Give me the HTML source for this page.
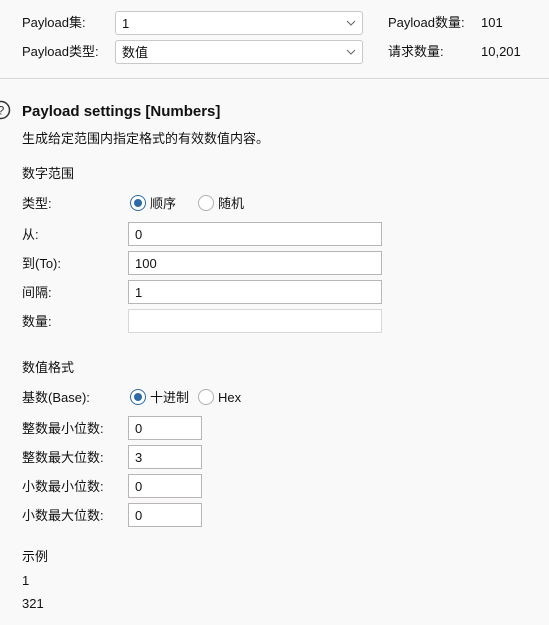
<!DOCTYPE html>
<html><head><meta charset="utf-8"><style>
*{margin:0;padding:0;box-sizing:border-box}
body{width:549px;height:625px;background:#f9f9f9;font-family:"Liberation Sans","Noto Sans CJK SC",sans-serif;font-size:13px;color:#111;position:relative;overflow:hidden}
.a{position:absolute;white-space:nowrap;line-height:16px;margin-top:1px}
.sel{position:absolute;left:115px;width:248px;height:24px;background:#fff;border:1px solid #c8c8c8;border-radius:3px;padding-left:6px;line-height:23px}
.sel svg{position:absolute;right:6px;top:8px}
.in{position:absolute;left:128px;height:24px;background:#fff;border:1px solid #b9b4b8;padding-left:6px;line-height:23px}
.r{position:absolute;width:16px;height:16px;border-radius:50%;background:#fff;border:1px solid #b0b0b0}
.r.on{border:1.5px solid #2c6aa8}
.r.on::after{content:"";position:absolute;left:2.5px;top:2.5px;width:8px;height:8px;border-radius:50%;background:#2c6aa8}
</style></head><body>
<div class="a" style="left:22px;top:14px">Payload集:</div>
<div class="sel" style="top:11px">1<svg width="10" height="6"><path d="M1 1L5 5L9 1" fill="none" stroke="#666" stroke-width="1"/></svg></div>
<div class="a" style="left:388px;top:14px">Payload数量:</div>
<div class="a" style="left:481px;top:14px">101</div>
<div class="a" style="left:22px;top:43px">Payload类型:</div>
<div class="sel" style="top:40px">数值<svg width="10" height="6"><path d="M1 1L5 5L9 1" fill="none" stroke="#666" stroke-width="1"/></svg></div>
<div class="a" style="left:388px;top:43px">请求数量:</div>
<div class="a" style="left:481px;top:43px">10,201</div>
<div style="position:absolute;left:0;top:78px;width:549px;height:1px;background:#d8d8d8"></div>
<svg style="position:absolute;left:-9px;top:100px" width="20" height="20"><circle cx="10" cy="10" r="8.5" fill="none" stroke="#333" stroke-width="1.5"/><text x="10" y="14.5" font-size="12" text-anchor="middle" fill="#333" font-family="Liberation Sans">?</text></svg>
<div class="a" style="left:22px;top:102px;font-size:15px;font-weight:bold;line-height:18px">Payload settings [Numbers]</div>
<div class="a" style="left:22px;top:130px">生成给定范围内指定格式的有效数值内容。</div>
<div class="a" style="left:22px;top:165px">数字范围</div>
<div class="a" style="left:22px;top:195px">类型:</div>
<div class="r on" style="left:130px;top:195px"></div><div class="a" style="left:150px;top:195px">顺序</div>
<div class="r" style="left:198px;top:195px"></div><div class="a" style="left:218px;top:195px">随机</div>
<div class="a" style="left:22px;top:226px">从:</div><div class="in" style="top:222px;width:254px">0</div>
<div class="a" style="left:22px;top:255px">到(To):</div><div class="in" style="top:251px;width:254px">100</div>
<div class="a" style="left:22px;top:284px">间隔:</div><div class="in" style="top:280px;width:254px">1</div>
<div class="a" style="left:22px;top:313px">数量:</div><div class="in" style="top:309px;width:254px;border-color:#d8d8d8"></div>
<div class="a" style="left:22px;top:359px">数值格式</div>
<div class="a" style="left:22px;top:389px">基数(Base):</div>
<div class="r on" style="left:130px;top:389px"></div><div class="a" style="left:150px;top:389px">十进制</div>
<div class="r" style="left:198px;top:389px"></div><div class="a" style="left:218px;top:389px">Hex</div>
<div class="a" style="left:22px;top:420px">整数最小位数:</div><div class="in" style="top:416px;width:74px">0</div>
<div class="a" style="left:22px;top:449px">整数最大位数:</div><div class="in" style="top:445px;width:74px">3</div>
<div class="a" style="left:22px;top:478px">小数最小位数:</div><div class="in" style="top:474px;width:74px">0</div>
<div class="a" style="left:22px;top:507px">小数最大位数:</div><div class="in" style="top:503px;width:74px">0</div>
<div class="a" style="left:22px;top:548px">示例</div>
<div class="a" style="left:22px;top:572px">1</div>
<div class="a" style="left:22px;top:595px">321</div>
</body></html>
